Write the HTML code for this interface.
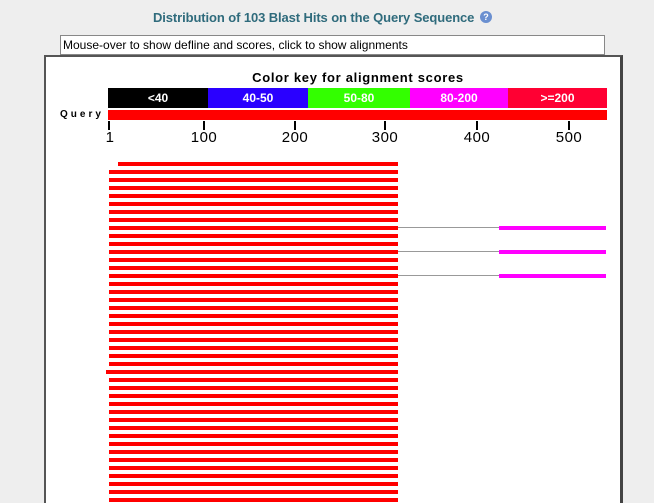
<!DOCTYPE html>
<html><head><style>
html,body{margin:0;width:654px;height:503px;overflow:hidden}
body{background:#eeeeee;position:relative;font-family:"Liberation Sans",Arial,sans-serif}
.a{position:absolute}
.t{font-weight:bold;font-size:13px;color:#2f6b7c;letter-spacing:-0.1px}
.seg{position:absolute;top:88px;height:20px;color:#fff;font-weight:bold;font-size:12px;text-align:center;line-height:20px}
.tick{position:absolute;top:121px;width:2px;height:9px;background:#000}
.lab{position:absolute;top:129px;font-size:15px;width:50px;text-align:center;margin-left:-25px;letter-spacing:0.5px}
.r{position:absolute;height:4px;background:#f00}
</style></head><body>
<div class="a t" style="left:153px;top:10px">Distribution of 103 Blast Hits on the Query Sequence</div>
<div class="a" style="left:480px;top:11px;width:12px;height:12px;border-radius:50%;background:#6a8fd0;color:#fff;font-size:9px;font-weight:bold;text-align:center;line-height:12px">?</div>
<div class="a" style="left:60px;top:35px;width:541px;height:18px;background:#fff;border:1px solid #888;font-size:12px;line-height:18px;padding-left:2px;color:#000">Mouse-over to show defline and scores, click to show alignments</div>
<div class="a" style="left:44px;top:55px;width:574px;height:460px;background:#fff;border:2px solid #555;border-right:3px solid #444;border-bottom:none"></div>
<div class="a" style="left:108px;top:70px;width:500px;text-align:center;font-weight:bold;font-size:13px;letter-spacing:0.7px">Color key for alignment scores</div>
<div class="seg" style="left:108px;width:100px;background:#000">&lt;40</div>
<div class="seg" style="left:208px;width:100px;background:#2a00ff">40-50</div>
<div class="seg" style="left:308px;width:102px;background:#33ff00">50-80</div>
<div class="seg" style="left:410px;width:98px;background:#ff00ff">80-200</div>
<div class="seg" style="left:508px;width:99px;background:#ff0033">&gt;=200</div>
<div class="a" style="left:60px;top:109px;font-size:10px;font-weight:bold;letter-spacing:3px">Query</div>
<div class="a" style="left:108px;top:110px;width:499px;height:10px;background:#f00"></div>
<div class="tick" style="left:108px"></div><div class="lab" style="left:110px">1</div>
<div class="tick" style="left:203px"></div><div class="lab" style="left:204px">100</div>
<div class="tick" style="left:294px"></div><div class="lab" style="left:295px">200</div>
<div class="tick" style="left:384px"></div><div class="lab" style="left:385px">300</div>
<div class="tick" style="left:476px"></div><div class="lab" style="left:477px">400</div>
<div class="tick" style="left:568px"></div><div class="lab" style="left:569px">500</div>
<div id="bars"></div>
<script>
var h='';
for(var i=0;i<43;i++){var y=162+i*8;var x=109;if(i==0)x=118;if(i==26)x=106;
h+='<div class="r" style="left:'+x+'px;top:'+y+'px;width:'+(398-x)+'px"></div>';
if(i==8||i==11||i==14){h+='<div class="a" style="left:398px;top:'+(y+1)+'px;width:101px;height:1px;background:#999"></div><div class="r" style="left:499px;top:'+y+'px;width:107px;background:#f0f"></div>';}}
document.getElementById('bars').innerHTML=h;
</script>
</body></html>
